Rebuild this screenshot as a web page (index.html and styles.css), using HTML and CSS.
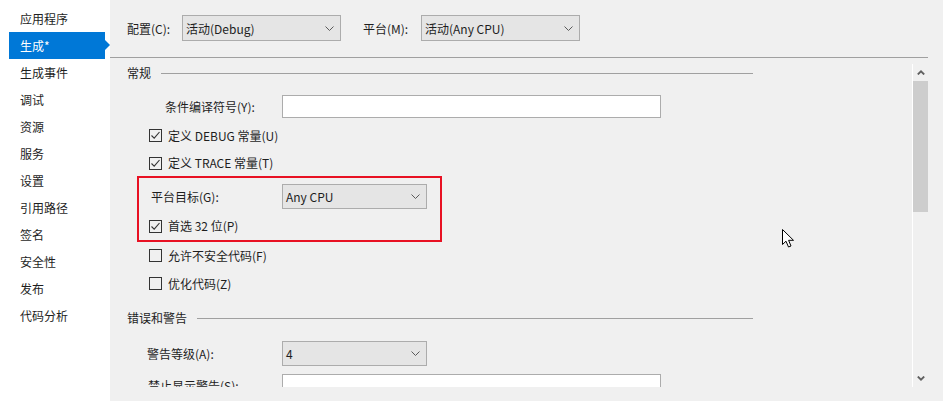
FILE: index.html
```html
<!DOCTYPE html>
<html lang="zh-CN">
<head>
<meta charset="utf-8">
<title>项目属性</title>
<link rel="stylesheet" href="styles.css">
</head>
<body>
<div class="app">
  <nav class="sidebar">
    <div class="nav-item">应用程序</div>
    <div class="nav-item active">生成*</div>
    <div class="nav-item">生成事件</div>
    <div class="nav-item">调试</div>
    <div class="nav-item">资源</div>
    <div class="nav-item">服务</div>
    <div class="nav-item">设置</div>
    <div class="nav-item">引用路径</div>
    <div class="nav-item">签名</div>
    <div class="nav-item">安全性</div>
    <div class="nav-item">发布</div>
    <div class="nav-item">代码分析</div>
  </nav>
  <main class="main">
    <div class="topbar">
      <span class="top-label">配置(C):</span>
      <div class="select select-top"><span>活动(Debug)</span><svg class="chev" width="9" height="5" viewBox="0 0 9 5"><path d="M0.5 0.5 L4.5 4.5 L8.5 0.5" fill="none" stroke="#5a5a5a" stroke-width="1"/></svg></div>
      <span class="top-label top-label-2">平台(M):</span>
      <div class="select select-top"><span>活动(Any CPU)</span><svg class="chev" width="9" height="5" viewBox="0 0 9 5"><path d="M0.5 0.5 L4.5 4.5 L8.5 0.5" fill="none" stroke="#5a5a5a" stroke-width="1"/></svg></div>
    </div>
    <div class="body">
      <div class="content">
        <div class="sec-head">常规</div>
        <div class="field-row row-symbols">
          <span class="field-label indent-38">条件编译符号(Y):</span>
          <div class="textbox"></div>
        </div>
        <div class="check-row h29 first-check"><span class="cb checked"><svg width="11" height="11" viewBox="0 0 11 11"><path d="M1.5 5.5 L4.2 8.2 L9.5 2" fill="none" stroke="#333" stroke-width="1.1"/></svg></span>定义 DEBUG 常量(U)</div>
        <div class="check-row h26"><span class="cb checked"><svg width="11" height="11" viewBox="0 0 11 11"><path d="M1.5 5.5 L4.2 8.2 L9.5 2" fill="none" stroke="#333" stroke-width="1.1"/></svg></span>定义 TRACE 常量(T)</div>
        <div class="highlight">
          <div class="field-row h25">
            <span class="field-label hl-label">平台目标(G):</span>
            <div class="select select-small"><span>Any CPU</span><svg class="chev" width="9" height="5" viewBox="0 0 9 5"><path d="M0.5 0.5 L4.5 4.5 L8.5 0.5" fill="none" stroke="#5a5a5a" stroke-width="1"/></svg></div>
          </div>
          <div class="check-row hl-check"><span class="cb checked"><svg width="11" height="11" viewBox="0 0 11 11"><path d="M1.5 5.5 L4.2 8.2 L9.5 2" fill="none" stroke="#333" stroke-width="1.1"/></svg></span>首选 32 位(P)</div>
        </div>
        <div class="check-row h27"><span class="cb"></span>允许不安全代码(F)</div>
        <div class="check-row h29"><span class="cb"></span>优化代码(Z)</div>
        <div class="sec-head sec-2">错误和警告</div>
        <div class="field-row h25 row-level">
          <span class="field-label indent-20">警告等级(A):</span>
          <div class="select select-small"><span>4</span><svg class="chev" width="9" height="5" viewBox="0 0 9 5"><path d="M0.5 0.5 L4.5 4.5 L8.5 0.5" fill="none" stroke="#5a5a5a" stroke-width="1"/></svg></div>
        </div>
        <div class="field-row row-suppress">
          <span class="field-label indent-21">禁止显示警告(S):</span>
          <div class="textbox"></div>
        </div>
      </div>
      <div class="scrollbar">
        <div class="sb-btn"><svg width="8" height="5" viewBox="0 0 8 5"><path d="M0.8 4.5 L4 1.3 L7.2 4.5" fill="none" stroke="#606060" stroke-width="1.8"/></svg></div>
        <div class="sb-thumb"></div>
        <div class="sb-track"></div>
        <div class="sb-btn"><svg width="8" height="5" viewBox="0 0 8 5"><path d="M0.8 0.5 L4 3.7 L7.2 0.5" fill="none" stroke="#606060" stroke-width="1.8"/></svg></div>
      </div>
    </div>
  </main>
  <svg class="cursor" width="13" height="20" viewBox="0 0 13 20"><path d="M0.5 0.5 L0.5 15.5 L4 12.2 L6.5 18 L9 17 L6.6 11.3 L11.5 11.3 Z" fill="#fff" stroke="#000" stroke-width="1" stroke-linejoin="miter"/></svg>
</div>
</body>
</html>
```
FILE: styles.css
```css
* { box-sizing: border-box; }
html, body { margin: 0; padding: 0; }
body {
  width: 943px;
  height: 401px;
  overflow: hidden;
  font-family: "Noto Sans CJK SC", "Microsoft YaHei", sans-serif;
  font-size: 12px;
  line-height: 16px;
  color: #1e1e1e;
  background: #f0f0f0;
}
.app { display: flex; height: 401px; position: relative; }

.sidebar { width: 110px; flex: none; background: #fff; padding-top: 5px; }
.nav-item { height: 27px; line-height: 27px; padding-left: 20px; white-space: nowrap; }
.nav-item.active {
  margin-left: 9px;
  width: 96px;
  padding-left: 11px;
  background: #0078d7;
  color: #fff;
  position: relative;
}
.nav-item.active::after {
  content: "";
  position: absolute;
  left: 96px;
  top: 8px;
  border-left: 5px solid #0078d7;
  border-top: 5.5px solid transparent;
  border-bottom: 5.5px solid transparent;
}

.main { flex: 1; display: flex; flex-direction: column; background: #f0f0f0; min-width: 0; }
.topbar {
  height: 58px;
  margin-right: 15px;
  padding: 15px 0 0 17px;
  border-bottom: 1px solid #a0a0a0;
  display: flex;
  align-items: flex-start;
}
.top-label { width: 55px; height: 26px; line-height: 28px; white-space: nowrap; }
.top-label-2 { width: 58px; margin-left: 22px; }

.select {
  display: flex;
  align-items: center;
  justify-content: space-between;
  background: #e5e5e5;
  border: 1px solid #acacac;
  padding: 0 6px 0 3px;
  white-space: nowrap;
}
.select span { line-height: 16px; padding-top: 1px; }
.select-top { width: 159px; height: 26px; }
.select-small { width: 145px; height: 25px; }
.chev { display: block; flex: none; }

.body { display: flex; height: 329px; }
.content { flex: 1; overflow: hidden; padding: 5px 0 0 17px; min-width: 0; }

.sec-head {
  display: flex;
  align-items: center;
  gap: 10px;
  height: 20px;
  width: 626px;
  white-space: nowrap;
}
.sec-head::after { content: ""; flex: 1; border-top: 1px solid #a0a0a0; }
.sec-2 { margin-top: 10px; }

.field-row { display: flex; align-items: center; }
.field-label { width: 155px; flex: none; white-space: nowrap; }
.indent-38 { padding-left: 38px; }
.indent-20 { padding-left: 20px; }
.indent-21 { padding-left: 21px; }
.hl-label { width: 143px; padding-left: 12px; }
.row-symbols { margin-top: 12px; height: 23px; }
.row-level { margin-top: 13px; }
.row-suppress { margin-top: 8px; height: 23px; }
.h25 { height: 25px; }

.textbox { width: 379px; height: 23px; background: #fff; border: 1px solid #acacac; flex: none; }

.check-row { display: flex; align-items: center; padding-left: 22px; white-space: nowrap; }
.first-check { margin-top: 3px; }
.h26 { height: 26px; }
.h27 { height: 27px; }
.h29 { height: 29px; }
.cb {
  width: 13px;
  height: 13px;
  border: 1px solid #333;
  margin-right: 6px;
  flex: none;
  display: flex;
  align-items: center;
  justify-content: center;
}
.cb svg { display: block; }

.highlight {
  margin-left: 10px;
  width: 305px;
  border: 2px solid #e81123;
  padding-top: 6px;
}
.hl-check { margin-top: 3px; height: 28px; padding-left: 10px; }

.scrollbar {
  width: 16px;
  flex: none;
  margin: 6px 15px 0 0;
  border-left: 1px solid #fff;
  display: flex;
  flex-direction: column;
}
.sb-btn { height: 17px; display: flex; align-items: center; justify-content: center; flex: none; }
.sb-btn svg { display: block; }
.sb-thumb { height: 131px; background: #cdcdcd; flex: none; }
.sb-track { flex: 1; }

.cursor { position: absolute; left: 782px; top: 229px; display: block; }
```
